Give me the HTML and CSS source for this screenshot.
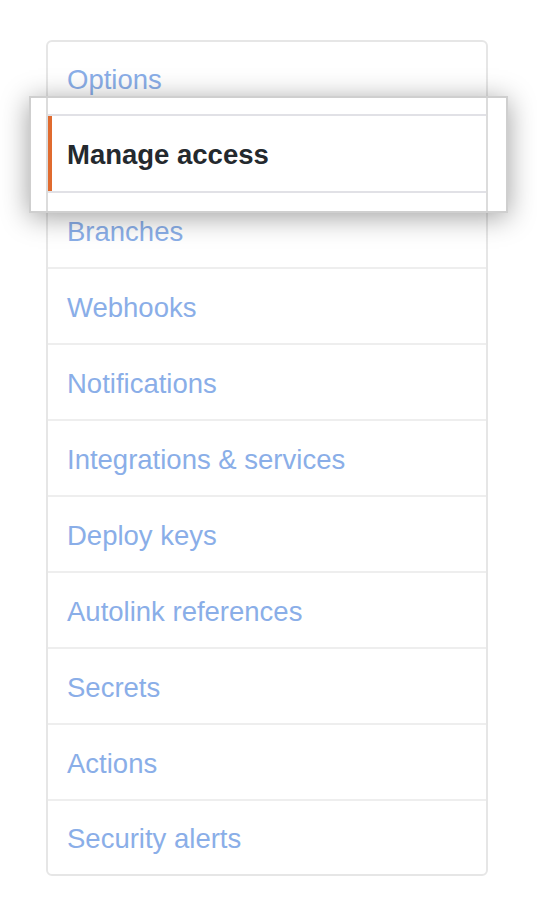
FILE: index.html
```html
<!DOCTYPE html>
<html>
<head>
<meta charset="utf-8">
<link rel="stylesheet" href="styles.css">
</head>
<body>
<nav class="menu">
  <a class="menu-item">Options</a>
  <a class="menu-item menu-item-covered">Manage access</a>
  <a class="menu-item">Branches</a>
  <a class="menu-item">Webhooks</a>
  <a class="menu-item">Notifications</a>
  <a class="menu-item">Integrations &amp; services</a>
  <a class="menu-item">Deploy keys</a>
  <a class="menu-item">Autolink references</a>
  <a class="menu-item">Secrets</a>
  <a class="menu-item">Actions</a>
  <a class="menu-item">Security alerts</a>
</nav>
<div class="callout">
  <div class="callout-frame">
    <div class="callout-item">Manage access</div>
  </div>
</div>
</body>
</html>
```

FILE: styles.css
```css
html, body {
  margin: 0;
  padding: 0;
  background: #ffffff;
}

body {
  position: relative;
  width: 537px;
  height: 907px;
  overflow: hidden;
  font-family: "Liberation Sans", Arial, sans-serif;
  font-size: 27.5px;
}

.menu {
  display: flex;
  flex-direction: column;
  box-sizing: border-box;
  width: 442px;
  margin: 40px 0 0 46px;
  border: 2px solid #e6e6e6;
  border-radius: 6px;
}

.menu-item {
  display: flex;
  align-items: center;
  box-sizing: border-box;
  height: 76px;
  padding: 3px 0 0 19px;
  border-top: 2px solid #eeeeee;
  color: #8aaee8;
  text-decoration: none;
}

.menu-item:first-child {
  border-top: 0;
  height: 73px;
  padding-top: 2px;
}

.menu-item:last-child {
  height: 75px;
}

.menu-item-covered {
  visibility: hidden;
}

.callout {
  position: absolute;
  left: 29px;
  top: 96px;
  width: 479px;
  height: 117px;
  box-sizing: border-box;
  border: 2px solid #cfcfcf;
  background: #ffffff;
  box-shadow: 0 4px 26px rgba(0, 0, 0, 0.38);
  padding-left: 15px;
  display: flex;
}

.callout-frame {
  width: 442px;
  box-sizing: border-box;
  border-left: 2px solid #dcdcdc;
  border-right: 2px solid #dcdcdc;
  padding-top: 16px;
}

.callout-item {
  display: flex;
  align-items: center;
  box-sizing: border-box;
  height: 79px;
  padding: 3px 0 0 19px;
  border-top: 2px solid #e1e1e6;
  border-bottom: 2px solid #e1e1e6;
  box-shadow: inset 4px 0 0 #e06b2f;
  color: #24292e;
  font-weight: bold;
}
```
